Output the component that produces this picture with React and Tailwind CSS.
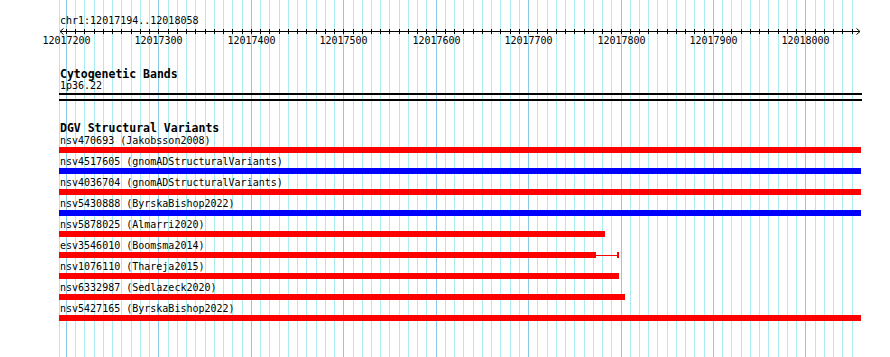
import React from 'react';

const START = 66;
const STEP = 9.242;
const grid = [{ x: 59, dark: false }].concat(
    Array.from({ length: 86 }, (_, k) => ({ x: Math.round(START + k * STEP), dark: k % 10 === 0 }))
);
const labels = [0, 10, 20, 30, 40, 50, 60, 70, 80].map((k) => ({
    x: Math.round(START + k * STEP),
    text: String(12017200 + k * 10),
}));

const variants = [
    { name: 'nsv470693 (Jakobsson2008)', color: 'bg-[#ff0000]', bar: 'w-[802px]' },
    { name: 'nsv4517605 (gnomADStructuralVariants)', color: 'bg-[#0000ff]', bar: 'w-[802px]' },
    { name: 'nsv4036704 (gnomADStructuralVariants)', color: 'bg-[#ff0000]', bar: 'w-[802px]' },
    { name: 'nsv5430888 (ByrskaBishop2022)', color: 'bg-[#0000ff]', bar: 'w-[802px]' },
    { name: 'nsv5878025 (Almarri2020)', color: 'bg-[#ff0000]', bar: 'w-[546px]' },
    { name: 'esv3546010 (Boomsma2014)', color: 'bg-[#ff0000]', bar: 'w-[537px]', tail: true },
    { name: 'nsv1076110 (Thareja2015)', color: 'bg-[#ff0000]', bar: 'w-[560px]' },
    { name: 'nsv6332987 (Sedlazeck2020)', color: 'bg-[#ff0000]', bar: 'w-[566px]' },
    { name: 'nsv5427165 (ByrskaBishop2022)', color: 'bg-[#ff0000]', bar: 'w-[802px]' },
];

function Grid() {
    return (
        <svg className="absolute inset-0" width="890" height="357">
            {grid.map((g, i) => (
                <line
                    key={i}
                    x1={g.x + 0.5}
                    x2={g.x + 0.5}
                    y1="0"
                    y2="357"
                    stroke={g.dark ? '#8cc8ea' : '#aaecf0'}
                    strokeWidth="1"
                />
            ))}
        </svg>
    );
}

function Ruler() {
    const off = 59;
    return (
        <svg width="803" height="20" overflow="visible" className="block overflow-visible">
            <line x1="1" x2="801" y1="5.5" y2="5.5" stroke="#000" />
            <path d="M1 5.5 L4.5 2.5 M1 5.5 L4.5 8.5" stroke="#000" fill="none" />
            <path d="M801 5.5 L797.5 2.5 M801 5.5 L797.5 8.5" stroke="#000" fill="none" />
            {grid.slice(1).map((g, i) => (
                <line key={i} x1={g.x - off + 0.5} x2={g.x - off + 0.5} y1="3" y2="8" stroke="#000" />
            ))}
            {labels.map((l) => (
                <text
                    key={l.text}
                    x={l.x - off + 0.5}
                    y="17.5"
                    textAnchor="middle"
                    fontSize="10"
                    fontFamily="'DejaVu Sans Mono', monospace"
                    fill="#000"
                >
                    {l.text}
                </text>
            ))}
        </svg>
    );
}

function VariantRow({ v }) {
    return (
        <div className="h-[21px]">
            <div className="h-[11px] leading-[11px] pl-px whitespace-pre">{v.name}</div>
            <div className="mt-px h-[6px] flex items-center">
                <div className={`${v.bar} h-[6px] ${v.color}`} />
                {v.tail && (
                    <>
                        <div className="w-[21px] h-px bg-[#ff0000]" />
                        <div className="w-[2px] h-[6px] bg-[#ff0000]" />
                    </>
                )}
            </div>
        </div>
    );
}

export default function App() {
    return (
        <div className="relative w-[890px] h-[357px] overflow-hidden bg-white text-black font-['DejaVu_Sans_Mono',monospace] text-[10px]">
            <Grid />
            <div className="relative pl-[59px] pt-[16px]">
                <div className="h-[10px] leading-[10px] pl-px">chr1:12017194..12018058</div>
                <Ruler />
                <div className="mt-[22px] h-[12px] leading-[12px] pl-px text-[11.5px] font-bold">Cytogenetic Bands</div>
                <div className="mt-px h-[10px] leading-[10px] pl-px">1p36.22</div>
                <div className="mt-[2px] w-[803px] h-[2px] bg-black" />
                <div className="mt-[4px] w-[803px] h-[2px] bg-black" />
                <div className="mt-[21px] mb-px h-[12px] leading-[12px] pl-px text-[11.5px] font-bold">DGV Structural Variants</div>
                {variants.map((v) => (
                    <VariantRow key={v.name} v={v} />
                ))}
            </div>
        </div>
    );
}
